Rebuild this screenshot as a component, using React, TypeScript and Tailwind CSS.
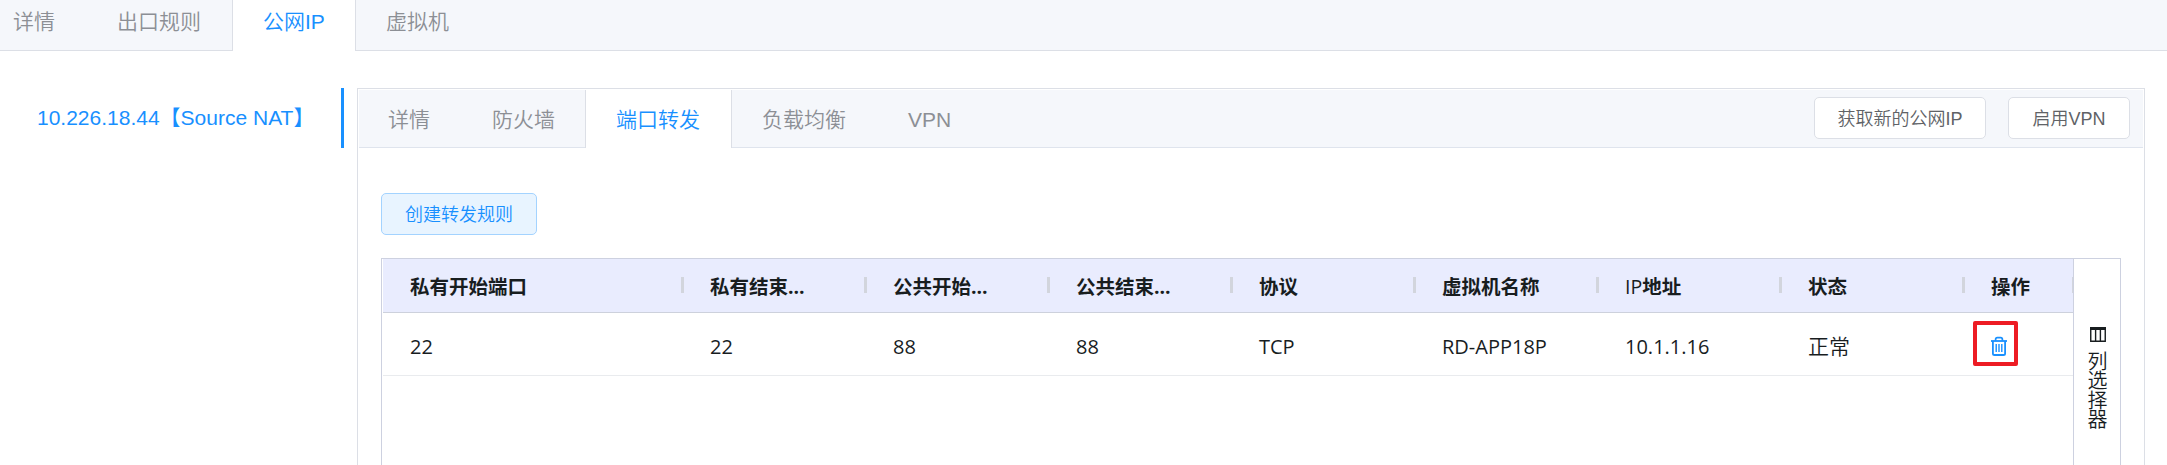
import React from 'react';

const ui = "font-['Liberation_Sans','Noto_Sans_CJK_SC',sans-serif]";
const grid = "font-['Open_Sans','Noto_Sans_CJK_SC',sans-serif]";

const columns = [
  { title: '私有开始端口', value: '22', width: 'w-[300px]' },
  { title: '私有结束...', value: '22', width: 'w-[183px]' },
  { title: '公共开始...', value: '88', width: 'w-[183px]' },
  { title: '公共结束...', value: '88', width: 'w-[183px]' },
  { title: '协议', value: 'TCP', width: 'w-[183px]' },
  { title: '虚拟机名称', value: 'RD-APP18P', width: 'w-[183px]' },
  { title: 'IP地址', value: '10.1.1.16', width: 'w-[183px]' },
  { title: '状态', value: '正常', width: 'w-[183px]' },
];

function TrashIcon() {
  return (
    <svg width="18" height="20" viewBox="0 0 18 20" fill="none" stroke="#1890ff" className="block">
      <path d="M1 5h16" strokeWidth="1.8" />
      <path d="M5.6 4.8V3.4q0-1.7 1.7-1.7h3.4q1.7 0 1.7 1.7v1.4" strokeWidth="1.7" />
      <path d="M2.9 5v12.4q0 1.6 1.6 1.6h9q1.6 0 1.6-1.6V5" strokeWidth="1.8" />
      <path d="M6.2 8v8M9 8v8M11.8 8v8" strokeWidth="1.4" />
    </svg>
  );
}

function ColumnsIcon() {
  return (
    <svg width="16" height="15" viewBox="0 0 16 15" fill="none" stroke="#181d1f" className="block">
      <path d="M0 1.5h16" strokeWidth="3" />
      <path d="M.75 2v12.25h14.5V2M5.6 2v12M10.4 2v12" strokeWidth="1.4" />
    </svg>
  );
}

function TopTabs() {
  return (
    <nav className="flex h-[51px] text-[21px] leading-[44px] font-[350] text-[#8c8f95]">
      <div className="w-[86px] border-b border-[#dcdfe6] bg-[#f5f7fb] pl-[13px]">详情</div>
      <div className="w-[146px] border-b border-[#dcdfe6] bg-[#f5f7fb] pl-[31px]">出口规则</div>
      <div className="w-[124px] border-x border-[#dcdfe6] pl-[30px] text-[#1890ff]">公网IP</div>
      <div className="flex-1 border-b border-[#dcdfe6] bg-[#f5f7fb] pl-[30px]">虚拟机</div>
    </nav>
  );
}

function PanelTabs() {
  return (
    <div className="mx-px mt-px flex h-[58px] text-[21px] leading-[60px] font-[350] text-[#8c8f95]">
      <div className="w-[102px] border-b border-[#dfe4ed] bg-[#f5f7fb] pl-[29px]">详情</div>
      <div className="w-[124px] border-b border-[#dfe4ed] bg-[#f5f7fb] pl-[31px]">防火墙</div>
      <div className="w-[147px] border-x border-[#dcdfe6] pl-[30px] text-[#1890ff]">端口转发</div>
      <div className="flex flex-1 border-b border-[#dfe4ed] bg-[#f5f7fb] pl-[30px]">
        <div className="w-[146px]">负载均衡</div>
        <div>VPN</div>
        <div className="ml-auto flex gap-[22px] pt-[7px] pr-[13px] text-[18px] leading-[42px] text-[#606266]">
          <button className="h-[42px] w-[172px] rounded-[5px] border border-[#dcdfe6] bg-white text-center">
            获取新的公网IP
          </button>
          <button className="h-[42px] w-[122px] rounded-[5px] border border-[#dcdfe6] bg-white text-center">
            启用VPN
          </button>
        </div>
      </div>
    </div>
  );
}

function RulesTable() {
  return (
    <div className={`mt-[23px] ml-[23px] flex h-[240px] w-[1740px] border border-[#cdd1e0] text-[#181d1f] ${grid}`}>
      <div className="w-[1691px] shrink-0 overflow-hidden pl-px">
        <div className="flex h-[54px] border-b border-[#cdd1dc] bg-[#e9ecfe] text-[19.5px] leading-[55px] font-bold">
          {columns.map((c) => (
            <div key={c.title} className={`flex shrink-0 justify-between pl-[27px] ${c.width}`}>
              <span className="whitespace-nowrap">
                {c.title.startsWith('IP') ? (
                  <>
                    <span className="font-medium">IP</span>
                    {c.title.slice(2)}
                  </>
                ) : (
                  c.title
                )}
              </span>
              <i className="mt-[18px] -mr-px h-4 w-[3px] bg-[#d2d5dd]" />
            </div>
          ))}
          <div className="pl-[27px]">操作</div>
          <i className="mt-[18px] ml-auto h-4 w-px bg-[#d2d5dd]" />
        </div>
        <div className="flex h-[63px] border-b border-[#e9ebee] text-[20px] leading-[67px]">
          {columns.map((c) => (
            <div
              key={c.title}
              className={`shrink-0 pl-[27px] ${c.width} ${c.value === '正常' ? 'text-[21px] font-[350]' : ''}`}
            >
              {c.value}
            </div>
          ))}
          <div className="relative pt-[23px] pl-[26px]">
            <TrashIcon />
            <span className="absolute top-2 left-[9px] h-[45px] w-[45px] rounded-[2px] border-4 border-[#ed1c24]" />
          </div>
        </div>
      </div>
      <div className="flex flex-1 flex-col items-center border-l border-[#cdd1e0] pt-[68px] pl-px">
        <ColumnsIcon />
        <div className="mt-[10px] w-5 text-[20px] leading-[19.4px] font-[350] break-all">列选择器</div>
      </div>
    </div>
  );
}

export default function App() {
  return (
    <div className={`h-[465px] w-[2167px] overflow-hidden bg-white ${ui}`}>
      <TopTabs />
      <div className="flex pt-[37px]">
        <aside className="h-[60px] w-[344px] border-r-[3px] border-[#1890ff] pl-[37px] text-[21px] leading-[60px] whitespace-nowrap text-[#1890ff]">
          10.226.18.44【Source NAT】
        </aside>
        <section className="ml-[13px] h-[420px] w-[1788px] border border-[#dcdfe6]">
          <PanelTabs />
          <button className="mt-[45px] ml-[23px] block h-[42px] w-[156px] rounded-[5px] border border-[#a3d3ff] bg-[#e8f4ff] text-[18px] leading-[42px] font-[350] text-[#1890ff]">
            创建转发规则
          </button>
          <RulesTable />
        </section>
      </div>
    </div>
  );
}
